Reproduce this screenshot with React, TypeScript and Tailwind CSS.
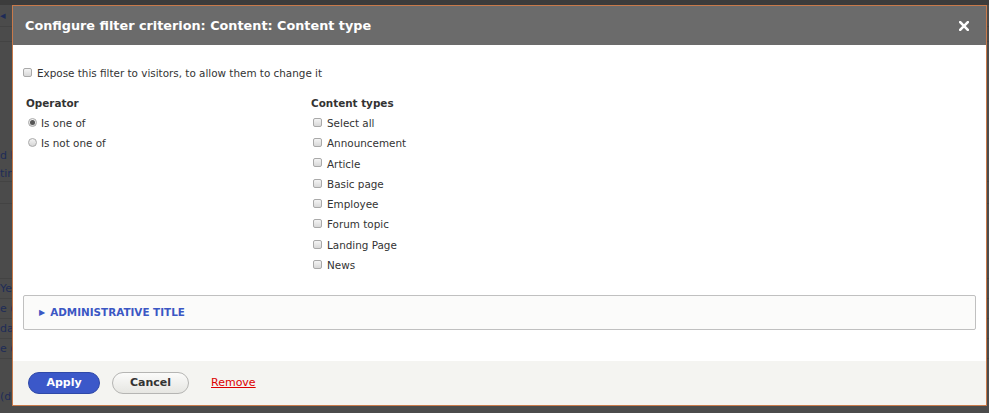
import React from "react";

const contentTypes = [
  "Select all",
  "Announcement",
  "Article",
  "Basic page",
  "Employee",
  "Forum topic",
  "Landing Page",
  "News",
];

function Checkbox() {
  return (
    <span className="mb-[3px] inline-block h-[9px] w-[9px] shrink-0 rounded-[2px] border border-[#a9a9a9] bg-gradient-to-b from-[#f4f4f4] to-[#d8d8d8]" />
  );
}

function Radio({ checked }: { checked?: boolean }) {
  return (
    <span className="mb-[3px] flex h-[9px] w-[9px] shrink-0 items-center justify-center rounded-full border border-[#a9a9a9] bg-gradient-to-b from-[#f4f4f4] to-[#d6d6d6]">
      {checked && <span className="h-[5px] w-[5px] rounded-full bg-[#555]" />}
    </span>
  );
}

// dimmed admin page behind the dialog
function PageBehind() {
  const rows = [
    { h: "h-[5px]", text: "", line: false },
    { h: "h-[22px]", text: "◂", line: true },
    { h: "h-[15px]", text: "", line: true },
    { h: "h-[103px]", text: "", line: false },
    { h: "h-[21px]", text: "d l", line: false },
    { h: "h-[16px]", text: "tin", line: true },
    { h: "h-[22px]", text: "", line: true },
    { h: "h-[75px]", text: "", line: true },
    { h: "h-[20px]", text: "Ye", line: true },
    { h: "h-[20px]", text: "e (=", line: true },
    { h: "h-[20px]", text: "dat", line: true },
    { h: "h-[20px]", text: "e (i", line: true },
    { h: "h-[25px]", text: "", line: false },
    { h: "h-[24px]", text: "(d", line: false },
  ];
  return (
    <div className="flex flex-col">
      {rows.map((r, i) => (
        <div
          key={i}
          className={`${r.h} flex items-center overflow-hidden whitespace-nowrap text-[11px] leading-none text-[#1e2b57] ${
            r.line ? "border-b border-[#434343]" : ""
          } ${i === 0 ? "bg-[#3c3c3c]" : ""}`}
        >
          {r.text}
        </div>
      ))}
    </div>
  );
}

export default function App() {
  return (
    <div className="relative h-[413px] w-[989px] overflow-hidden bg-[#4b4b4b] font-['DejaVu_Sans',sans-serif]">
      <PageBehind />

      <div className="absolute left-[12px] top-[5px] flex h-[401px] w-[975px] flex-col border border-[#c87a4b] bg-white">
        <div className="flex h-[39px] shrink-0 items-center justify-between bg-[#6b6b6b] pl-[12px] pr-[17px]">
          <h1 className="text-[12.8px] font-bold text-white">
            Configure filter criterion: Content: Content type
          </h1>
          <svg width="10" height="10" viewBox="0 0 10 10" className="mt-[1px]">
            <path d="M1.2 1.2 L8.8 8.8 M8.8 1.2 L1.2 8.8" stroke="#fff" strokeWidth="2.6" strokeLinecap="square" />
          </svg>
        </div>

        <div className="flex flex-1 flex-col px-[10px] pt-[21px] text-[10.4px] text-[#333]">
          <label className="flex items-center gap-[5px]">
            <Checkbox />
            Expose this filter to visitors, to allow them to change it
          </label>

          <div className="mt-[14px] flex">
            <div className="w-[288px] pl-[3px]">
              <div className="font-bold">Operator</div>
              <div className="mt-[5px] flex flex-col gap-[5px] pl-[2px]">
                <label className="flex h-[15px] items-center gap-[4px]">
                  <Radio checked />
                  Is one of
                </label>
                <label className="flex h-[15px] items-center gap-[4px]">
                  <Radio />
                  Is not one of
                </label>
              </div>
            </div>
            <div>
              <div className="font-bold">Content types</div>
              <div className="mt-[5px] flex flex-col gap-[5.3px] pl-[2px]">
                {contentTypes.map((t) => (
                  <label key={t} className="flex h-[15px] items-center gap-[5px]">
                    <Checkbox />
                    {t}
                  </label>
                ))}
              </div>
            </div>
          </div>

          <div className="mt-[22px] flex h-[35px] items-center rounded-[2px] border border-[#c0c0c0] bg-[#fbfbfa] pl-[15px]">
            <span className="text-[8px] text-[#3b57c4]">▶</span>
            <span className="ml-[5px] font-bold text-[#3b57c4]">ADMINISTRATIVE TITLE</span>
          </div>
        </div>

        <div className="flex h-[44px] shrink-0 items-center gap-[12px] bg-[#f4f4f1] pl-[15px]">
          <button className="h-[22px] w-[72px] rounded-full border border-[#2f49a8] bg-[#3b58c9] text-[11px] font-bold text-white">
            Apply
          </button>
          <button className="h-[22px] w-[77px] rounded-full border border-[#b5b5b3] bg-gradient-to-b from-[#fbfbfa] to-[#e6e6e2] text-[11px] font-bold text-[#333]">
            Cancel
          </button>
          <a className="ml-[10px] text-[11px] text-[#dd0000] underline">Remove</a>
        </div>
      </div>
    </div>
  );
}
